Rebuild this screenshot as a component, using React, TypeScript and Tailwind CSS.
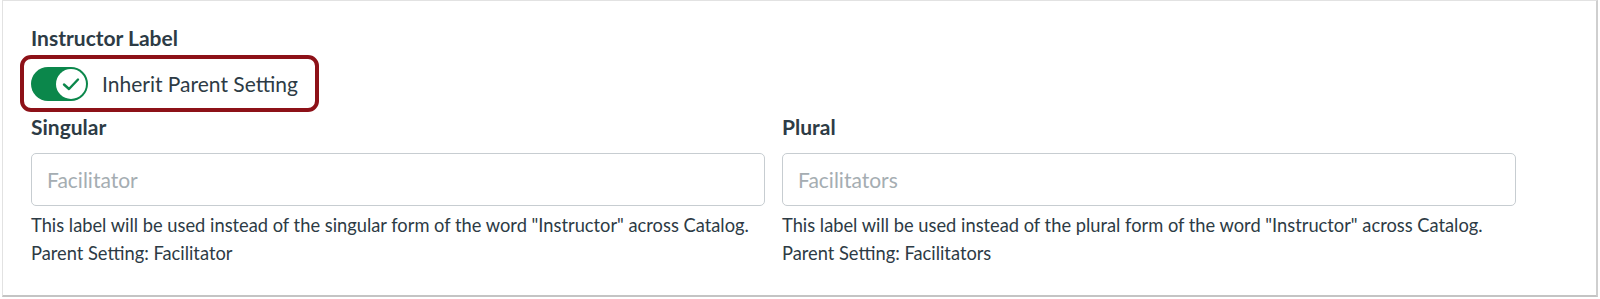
import { useState } from 'react';

const fields = [
  {
    key: 'singular',
    label: 'Singular',
    placeholder: 'Facilitator',
    help: 'This label will be used instead of the singular form of the word "Instructor" across Catalog.',
    parent: 'Parent Setting: Facilitator',
  },
  {
    key: 'plural',
    label: 'Plural',
    placeholder: 'Facilitators',
    help: 'This label will be used instead of the plural form of the word "Instructor" across Catalog.',
    parent: 'Parent Setting: Facilitators',
  },
];

export default function App() {
  const [inherit, setInherit] = useState(true);

  return (
    <div className="min-h-[299px] bg-white font-['Lato','Liberation_Sans',sans-serif] text-[#2d3b45]">
      <div className="ml-[2px] w-[1596px] border border-r-2 border-b-2 border-[#e2e2e2] border-r-[#cfcfcf] border-b-[#c4c4c4] pl-[28px] pt-[24px] pb-[28px]">
        <h3 className="text-[21px] leading-[26px] font-bold">Instructor Label</h3>

        {/* Highlighted toggle */}
        <div className="mt-[4px] -ml-[11px] flex h-[57px] w-[299px] items-center rounded-[11px] border-4 border-[#8d1118] pl-[7px]">
          <button
            onClick={() => setInherit(!inherit)}
            className={`flex h-[34px] w-[57px] shrink-0 items-center rounded-full px-[2px] ${
              inherit ? 'justify-end bg-[#0b874b]' : 'justify-start bg-[#c7cdd1]'
            }`}
          >
            <span className="flex h-[30px] w-[30px] items-center justify-center rounded-full bg-white">
              {inherit && (
                <svg width="20" height="20" viewBox="0 0 20 20" fill="none">
                  <polyline
                    points="3,10.5 8,15 17,5.5"
                    stroke="#0b874b"
                    strokeWidth="2.4"
                    strokeLinecap="round"
                    strokeLinejoin="round"
                  />
                </svg>
              )}
            </span>
          </button>
          <span className="ml-[14px] text-[21px] leading-[26px]">Inherit Parent Setting</span>
        </div>

        <div className="mt-[2px] flex gap-[17px]">
          {fields.map((f) => (
            <div key={f.key} className="w-[734px]">
              <label className="block text-[21px] leading-[26px] font-bold">{f.label}</label>
              <input
                placeholder={f.placeholder}
                className="mt-[13px] h-[53px] w-full rounded-[5px] border border-[#c7cdd1] px-[15px] text-[21px] placeholder:text-[#a5adb2] outline-none"
              />
              <p className="mt-[5px] text-[18.3px] leading-[28px]">{f.help}</p>
              <p className="text-[18.3px] leading-[28px]">{f.parent}</p>
            </div>
          ))}
        </div>
      </div>
    </div>
  );
}
